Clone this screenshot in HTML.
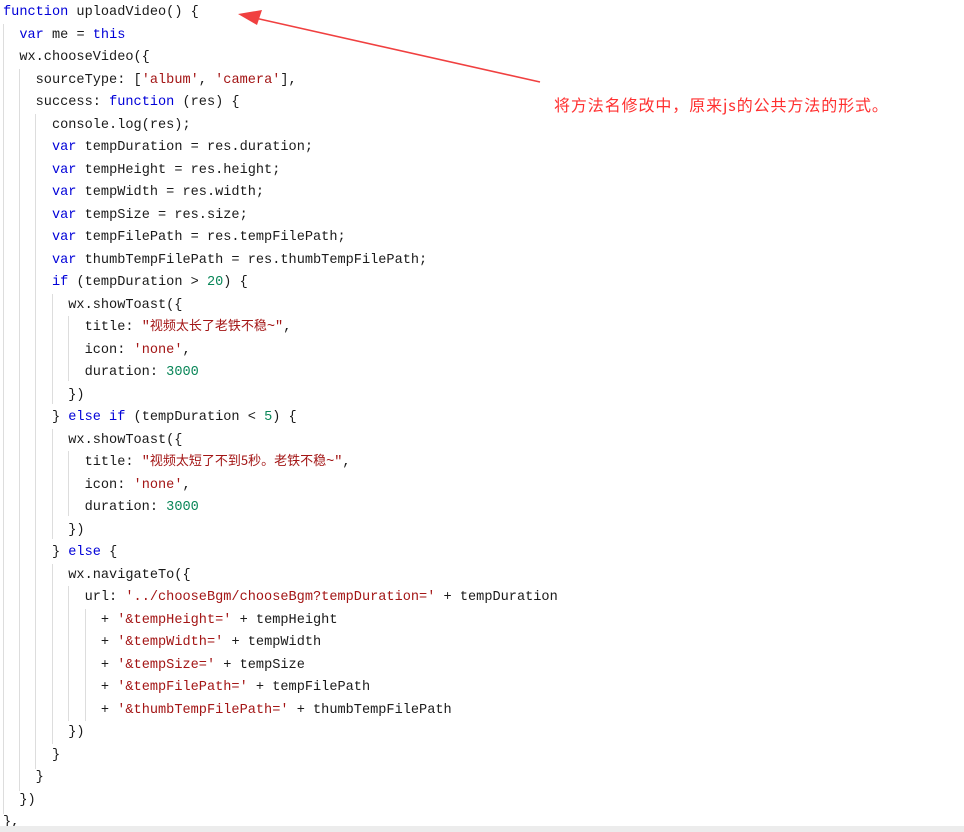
<!DOCTYPE html>
<html><head><meta charset="utf-8"><style>
html,body{margin:0;padding:0;background:#fff;width:964px;height:832px;overflow:hidden;position:relative}
.code{position:absolute;left:3px;top:2px;font-family:"Liberation Mono","Noto Sans CJK SC",monospace;font-size:13.6px;color:#1a1a1a;}
.l{height:22.5px;line-height:22.5px;white-space:pre;position:relative;overflow:visible}
.k{color:#0000d8}.s{color:#a31515}.n{color:#098658}
.g{position:absolute;width:1px;background:#ddd}
.bar{position:absolute;left:0;top:826px;width:964px;height:6px;background:#ececec}
.note{position:absolute;left:554px;top:92px;font-family:"Noto Sans CJK SC",sans-serif;font-size:16px;color:#ff3030;letter-spacing:0.9px;white-space:nowrap}
.cjk{font-family:"Noto Sans CJK SC",sans-serif;font-size:13px;line-height:0}
</style></head><body>
<div class="g" style="left:3px;top:24px;height:790px"></div>
<div class="g" style="left:19px;top:69px;height:722px"></div>
<div class="g" style="left:35px;top:114px;height:655px"></div>
<div class="g" style="left:52px;top:294px;height:110px"></div>
<div class="g" style="left:68px;top:316px;height:65px"></div>
<div class="g" style="left:52px;top:429px;height:110px"></div>
<div class="g" style="left:68px;top:451px;height:65px"></div>
<div class="g" style="left:52px;top:564px;height:180px"></div>
<div class="g" style="left:68px;top:586px;height:135px"></div>
<div class="g" style="left:85px;top:609px;height:112px"></div>
<div class="code">
<div class="l"><span class="k">function</span> uploadVideo() {</div>
<div class="l">  <span class="k">var</span> me = <span class="k">this</span></div>
<div class="l">  wx.chooseVideo({</div>
<div class="l">    sourceType: [<span class="s">'album'</span>, <span class="s">'camera'</span>],</div>
<div class="l">    success: <span class="k">function</span> (res) {</div>
<div class="l">      console.log(res);</div>
<div class="l">      <span class="k">var</span> tempDuration = res.duration;</div>
<div class="l">      <span class="k">var</span> tempHeight = res.height;</div>
<div class="l">      <span class="k">var</span> tempWidth = res.width;</div>
<div class="l">      <span class="k">var</span> tempSize = res.size;</div>
<div class="l">      <span class="k">var</span> tempFilePath = res.tempFilePath;</div>
<div class="l">      <span class="k">var</span> thumbTempFilePath = res.thumbTempFilePath;</div>
<div class="l">      <span class="k">if</span> (tempDuration &gt; <span class="n">20</span>) {</div>
<div class="l">        wx.showToast({</div>
<div class="l">          title: <span class="s">"<span class="cjk">视频太长了老铁不稳</span>~"</span>,</div>
<div class="l">          icon: <span class="s">'none'</span>,</div>
<div class="l">          duration: <span class="n">3000</span></div>
<div class="l">        })</div>
<div class="l">      } <span class="k">else if</span> (tempDuration &lt; <span class="n">5</span>) {</div>
<div class="l">        wx.showToast({</div>
<div class="l">          title: <span class="s">"<span class="cjk">视频太短了不到5秒。老铁不稳</span>~"</span>,</div>
<div class="l">          icon: <span class="s">'none'</span>,</div>
<div class="l">          duration: <span class="n">3000</span></div>
<div class="l">        })</div>
<div class="l">      } <span class="k">else</span> {</div>
<div class="l">        wx.navigateTo({</div>
<div class="l">          url: <span class="s">'../chooseBgm/chooseBgm?tempDuration='</span> + tempDuration</div>
<div class="l">            + <span class="s">'&amp;tempHeight='</span> + tempHeight</div>
<div class="l">            + <span class="s">'&amp;tempWidth='</span> + tempWidth</div>
<div class="l">            + <span class="s">'&amp;tempSize='</span> + tempSize</div>
<div class="l">            + <span class="s">'&amp;tempFilePath='</span> + tempFilePath</div>
<div class="l">            + <span class="s">'&amp;thumbTempFilePath='</span> + thumbTempFilePath</div>
<div class="l">        })</div>
<div class="l">      }</div>
<div class="l">    }</div>
<div class="l">  })</div>
<div class="l">},</div>
</div>
<svg style="position:absolute;left:0;top:0" width="964" height="832">
<line x1="540" y1="82" x2="255" y2="18" stroke="#f04040" stroke-width="1.6"/>
<polygon points="238,14 262,10 257,25" fill="#f04040"/>
</svg>
<div class="note">将方法名修改中，原来js的公共方法的形式。</div>
<div class="bar"></div>
</body></html>
